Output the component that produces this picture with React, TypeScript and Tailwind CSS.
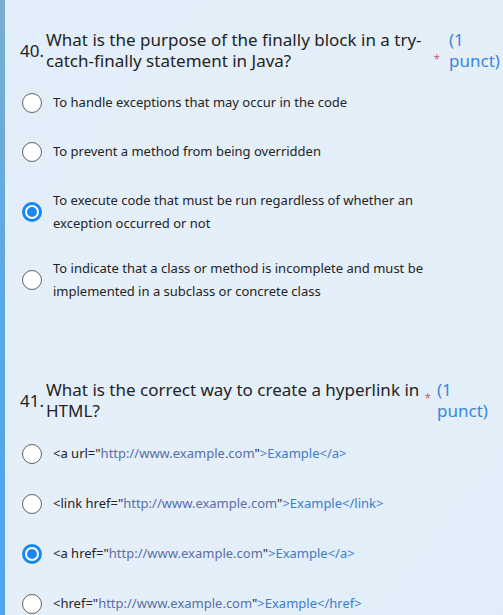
import React from "react";

type Part = { t: string; c?: "url" | "tag" };

type Option = {
  parts: Part[];
  checked?: boolean;
  extra?: string;
};

type Question = {
  num: string;
  title: string;
  titleW: string;
  starBox: string;
  listCls: string;
  options: Option[];
};

const questions: Question[] = [
  {
    num: "40.",
    title: "What is the purpose of the finally block in a try-catch-finally statement in Java?",
    titleW: "w-[380px]",
    starBox: "w-[23px] pr-[9px] self-end pb-[4px]",
    listCls: "gap-[4px] mt-[9px]",
    options: [
      { parts: [{ t: "To handle exceptions that may occur in the code" }] },
      { parts: [{ t: "To prevent a method from being overridden" }] },
      {
        parts: [{ t: "To execute code that must be run regardless of whether an exception occurred or not" }],
        checked: true,
      },
      {
        parts: [{ t: "To indicate that a class or method is incomplete and must be implemented in a subclass or concrete class" }],
        extra: "-mt-[4px]",
      },
    ],
  },
  {
    num: "41.",
    title: "What is the correct way to create a hyperlink in HTML?",
    titleW: "w-[378px]",
    starBox: "w-[13px] pr-[6px] self-start pt-[13px]",
    listCls: "gap-[5px] mt-[10px]",
    options: [
      {
        parts: [
          { t: '<a url="' },
          { t: "http://www.example.com", c: "url" },
          { t: '"' },
          { t: ">Example</a>", c: "tag" },
        ],
      },
      {
        parts: [
          { t: '<link href="' },
          { t: "http://www.example.com", c: "url" },
          { t: '"' },
          { t: ">Example</link>", c: "tag" },
        ],
      },
      {
        parts: [
          { t: '<a href="' },
          { t: "http://www.example.com", c: "url" },
          { t: '"' },
          { t: ">Example</a>", c: "tag" },
        ],
        checked: true,
      },
      {
        parts: [
          { t: '<href="' },
          { t: "http://www.example.com", c: "url" },
          { t: '"' },
          { t: ">Example</href>", c: "tag" },
        ],
      },
    ],
  },
];

function Radio({ checked }: { checked?: boolean }) {
  if (checked) {
    return (
      <span className="shrink-0 w-[20px] h-[20px] rounded-full bg-[#1a86f0] flex items-center justify-center">
        <span className="w-[14px] h-[14px] rounded-full border-[2px] border-white bg-[#1a86f0]" />
      </span>
    );
  }
  return (
    <span className="shrink-0 w-[20px] h-[20px] rounded-full border border-[#616161] bg-white" />
  );
}

function QuestionBlock({ q }: { q: Question }) {
  return (
    <div className="flex flex-col">
      <div className="flex items-center text-[17px] leading-[21px] text-[#242424]">
        <span className="w-[26px] pl-[15px] box-content shrink-0">{q.num}</span>
        <span className={`${q.titleW} shrink-0`}>{q.title}</span>
        <span className={`${q.starBox} shrink-0 text-right text-[#c4314b] text-[12px] leading-[14px] font-light`}>
          *
        </span>
        <span className="text-[#3a86dc] w-[52px] shrink-0">(1 punct)</span>
      </div>
      <div className={`flex flex-col ${q.listCls}`}>
        {q.options.map((o, i) => (
          <label
            key={i}
            className={`flex items-center gap-[11px] pl-[17px] pr-[60px] py-[11px] ${o.extra ?? ""}`}
          >
            <Radio checked={o.checked} />
            <span className="text-[13px] leading-[23px] text-[#242424]">
              {o.parts.map((p, j) => (
                <span
                  key={j}
                  className={
                    p.c === "url" ? "text-[#5b6ea8]" : p.c === "tag" ? "text-[#3d7cc9]" : ""
                  }
                >
                  {p.t}
                </span>
              ))}
            </span>
          </label>
        ))}
      </div>
    </div>
  );
}

export default function App() {
  return (
    <div
      className="flex w-[503px] h-[615px] overflow-hidden"
      style={{ fontFamily: '"Segoe UI", "Noto Sans", sans-serif' }}
    >
      <div className="w-[5px] shrink-0 bg-gradient-to-b from-[#79aecf] via-[#5aa7e6] to-[#4fa6ee]" />
      <div className="flex-1 bg-gradient-to-br from-[#e2eef9] via-[#e4eff9] to-[#e1edf8] flex flex-col gap-[65px] pt-[29px]">
        {questions.map((q) => (
          <QuestionBlock key={q.num} q={q} />
        ))}
      </div>
    </div>
  );
}
